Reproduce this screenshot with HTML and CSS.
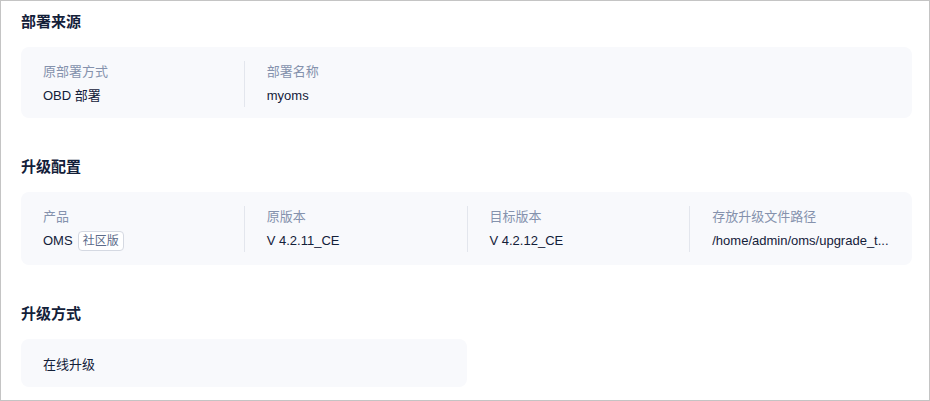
FILE: index.html
```html
<!DOCTYPE html>
<html lang="zh-CN">
<head>
<meta charset="utf-8">
<title>升级</title>
<link rel="stylesheet" href="styles.css">
</head>
<body>
<div class="page">
  <section class="section">
    <h2 class="title">部署来源</h2>
    <div class="card grid4">
      <div class="item">
        <div class="label">原部署方式</div>
        <div class="value">OBD 部署</div>
      </div>
      <div class="item">
        <div class="label">部署名称</div>
        <div class="value">myoms</div>
      </div>
    </div>
  </section>
  <section class="section">
    <h2 class="title">升级配置</h2>
    <div class="card grid4 card-tall">
      <div class="item">
        <div class="label">产品</div>
        <div class="value">OMS<span class="tag">社区版</span></div>
      </div>
      <div class="item">
        <div class="label">原版本</div>
        <div class="value">V 4.2.11_CE</div>
      </div>
      <div class="item">
        <div class="label">目标版本</div>
        <div class="value">V 4.2.12_CE</div>
      </div>
      <div class="item">
        <div class="label">存放升级文件路径</div>
        <div class="value">/home/admin/oms/upgrade_t...</div>
      </div>
    </div>
  </section>
  <section class="section">
    <h2 class="title">升级方式</h2>
    <div class="card half">
      <div class="plain">在线升级</div>
    </div>
  </section>
</div>
</body>
</html>
```
FILE: styles.css
```css
* { box-sizing: border-box; }
html, body {
  margin: 0;
  padding: 0;
  background: #ffffff;
}
body {
  font-family: "Liberation Sans", "Noto Sans CJK SC", sans-serif;
  color: #132039;
}
.page {
  width: 930px;
  height: 401px;
  border: 1px solid #c4c4c4;
  padding: 10px 17px 0 20px;
  overflow: hidden;
}
.section + .section {
  margin-top: 38px;
}
.title {
  margin: 0 0 14px;
  font-size: 15px;
  line-height: 22px;
  font-weight: 600;
  color: #132039;
}
.card {
  background: #f8f9fc;
  border-radius: 8px;
}
.grid4 {
  display: grid;
  grid-template-columns: repeat(4, 1fr);
  padding: 14px 0 11px;
}
.card-tall {
  padding-bottom: 13px;
}
.item {
  padding: 0 22px;
  min-width: 0;
}
.item + .item {
  border-left: 1px solid #e3e6ed;
}
.label {
  font-size: 13px;
  line-height: 22px;
  color: #8592ad;
}
.value {
  margin-top: 2px;
  font-size: 13px;
  line-height: 22px;
  color: #132039;
  display: flex;
  align-items: center;
  white-space: nowrap;
}
.tag {
  display: inline-block;
  margin-left: 5px;
  padding: 0 4px;
  height: 20px;
  line-height: 18px;
  font-size: 12px;
  color: #5c6b8a;
  border: 1px solid #d5d9e2;
  border-radius: 4px;
  background: #ffffff;
}
.half {
  width: 50%;
  padding: 15px 22px 11px;
}
.plain {
  font-size: 13px;
  line-height: 22px;
  color: #132039;
}
```
